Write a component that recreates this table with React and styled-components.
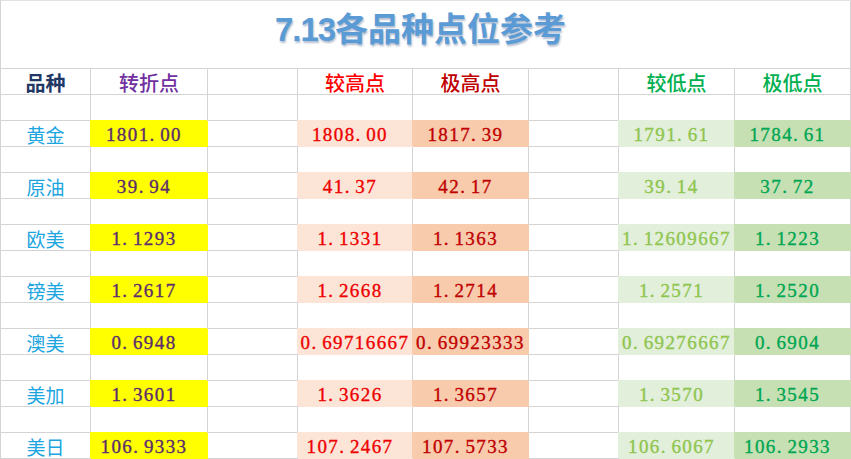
import React from 'react';
import styled, { createGlobalStyle } from 'styled-components';

// ── Data ──────────────────────────────────────────────────────────────────────
const COLUMNS = [
  { head: '转折点', headColor: '#7030a0', bg: '#ffff00', color: '#5b2d6e' },
  null,
  { head: '较高点', headColor: '#ff0000', bg: '#fce4d6', color: '#ee0000' },
  { head: '极高点', headColor: '#c00000', bg: '#f8cbad', color: '#c00000' },
  null,
  { head: '较低点', headColor: '#00b050', bg: '#e2efda', color: '#8fc54f' },
  { head: '极低点', headColor: '#00b050', bg: '#c6e0b4', color: '#00a651' },
];

const ROWS = [
  { name: '黄金', values: ['1801.00', '1808.00', '1817.39', '1791.61', '1784.61'] },
  { name: '原油', values: ['39.94', '41.37', '42.17', '39.14', '37.72'] },
  { name: '欧美', values: ['1.1293', '1.1331', '1.1363', '1.12609667', '1.1223'] },
  { name: '镑美', values: ['1.2617', '1.2668', '1.2714', '1.2571', '1.2520'] },
  { name: '澳美', values: ['0.6948', '0.69716667', '0.69923333', '0.69276667', '0.6904'] },
  { name: '美加', values: ['1.3601', '1.3626', '1.3657', '1.3570', '1.3545'] },
  { name: '美日', values: ['106.9333', '107.2467', '107.5733', '106.6067', '106.2933'] },
];

const GRID = '#d4d4d4';
const CJK = '"Noto Sans CJK SC", "Noto Sans", sans-serif';

// ── Styled ────────────────────────────────────────────────────────────────────
const GlobalStyle = createGlobalStyle`
  html, body { margin: 0; padding: 0; background: #fff; }
  body { font-family: ${CJK}; }
`;

const Sheet = styled.div`
  width: 851px;
  box-sizing: border-box;
  display: grid;
  grid-template-columns: 90px 117px 90px 115px 116px 90px 116px 116px;
  grid-template-rows: 68px repeat(15, 26px);
  border-left: 1px solid ${GRID};
  border-top: 1px solid #e2e2e2;
  background: #fff;
  overflow: hidden;
`;

const TitleCell = styled.div`
  grid-column: 1 / -1;
  box-sizing: border-box;
  border-right: 1px solid ${GRID};
  border-bottom: 1px solid ${GRID};
  display: flex;
  align-items: center;
  justify-content: center;
  padding: 0 10px 13px 0;
`;

const Title = styled.h1`
  margin: 0;
  font-family: ${CJK};
  font-size: 33px;
  font-weight: 700;
  line-height: 1;
  color: #5b9bd5;
  text-shadow: 1px 2px 2px rgba(40, 70, 120, 0.35);
  span {
    font-family: "Liberation Sans", Arial, sans-serif;
    letter-spacing: -1px;
  }
`;

const Cell = styled.div`
  box-sizing: border-box;
  border-right: 1px solid ${p => p.$bg || GRID};
  border-bottom: 1px solid ${p => p.$bg || GRID};
  background: ${p => p.$bg || 'transparent'};
  box-shadow: ${p => (p.$bg ? `-1px -1px 0 0 ${p.$bg}` : 'none')};
  display: flex;
  align-items: center;
  justify-content: center;
  white-space: nowrap;
`;

const HeadCell = styled(Cell)`
  font-family: ${CJK};
  font-size: 20px;
  font-weight: ${p => (p.$strong ? 700 : 500)};
  color: ${p => p.$color};
  padding-top: 1px;
`;

const NameCell = styled(Cell)`
  font-family: ${CJK};
  font-size: 19px;
  color: #1ca5df;
  padding-top: 1px;
`;

const ValueCell = styled(Cell)`
  font-family: "Liberation Serif", "Times New Roman", serif;
  font-size: 19px;
  letter-spacing: 1.4px;
  color: ${p => p.$color};
  -webkit-text-stroke: 0.35px ${p => p.$color};
  padding: 3px ${p => (p.$wide ? 0 : 10)}px 0 0;
`;

const Dot = styled.span`
  margin-right: 4.5px;
`;

// ── Component ─────────────────────────────────────────────────────────────────
const Num = ({ v }) => {
  const [a, b] = v.split('.');
  return <>{a}<Dot>.</Dot>{b}</>;
};

const BlankRow = () => (
  <>
    <Cell />
    {COLUMNS.map((_, i) => <Cell key={i} />)}
  </>
);

const App = () => (
  <>
    <GlobalStyle />
    <Sheet>
      <TitleCell>
        <Title><span>7.13</span>各品种点位参考</Title>
      </TitleCell>

      <HeadCell $color="#1f3864" $strong>品种</HeadCell>
      {COLUMNS.map((c, i) =>
        c ? <HeadCell key={i} $color={c.headColor}>{c.head}</HeadCell> : <Cell key={i} />
      )}

      {ROWS.map(row => {
        let n = 0;
        return (
          <React.Fragment key={row.name}>
            <BlankRow />
            <NameCell>{row.name}</NameCell>
            {COLUMNS.map((c, i) => {
              if (!c) return <Cell key={i} />;
              const v = row.values[n++];
              return (
                <ValueCell key={i} $bg={c.bg} $color={c.color} $wide={v.length >= 10}>
                  <Num v={v} />
                </ValueCell>
              );
            })}
          </React.Fragment>
        );
      })}
    </Sheet>
  </>
);

export default App;
